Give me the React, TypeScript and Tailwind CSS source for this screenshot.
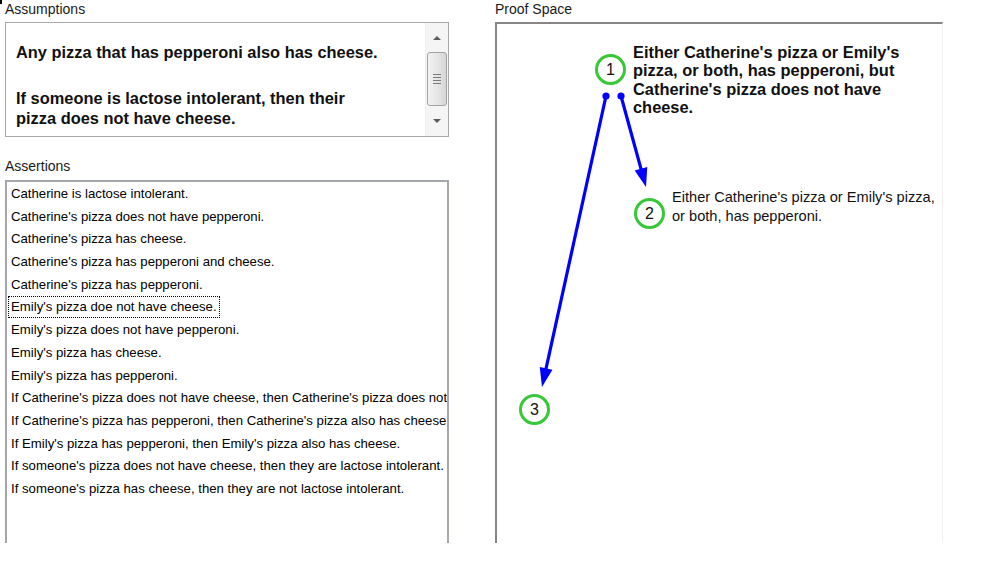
import React from "react";

const items = [
  "Catherine is lactose intolerant.",
  "Catherine's pizza does not have pepperoni.",
  "Catherine's pizza has cheese.",
  "Catherine's pizza has pepperoni and cheese.",
  "Catherine's pizza has pepperoni.",
  "Emily's pizza doe not have cheese.",
  "Emily's pizza does not have pepperoni.",
  "Emily's pizza has cheese.",
  "Emily's pizza has pepperoni.",
  "If Catherine's pizza does not have cheese, then Catherine's pizza does not have pepperoni.",
  "If Catherine's pizza has pepperoni, then Catherine's pizza also has cheese.",
  "If Emily's pizza has pepperoni, then Emily's pizza also has cheese.",
  "If someone's pizza does not have cheese, then they are lactose intolerant.",
  "If someone's pizza has cheese, then they are not lactose intolerant.",
];

function Arrow({ x1, y1, x2, y2 }: { x1: number; y1: number; x2: number; y2: number }) {
  const dx = x2 - x1;
  const dy = y2 - y1;
  const L = Math.hypot(dx, dy);
  const ux = dx / L;
  const uy = dy / L;
  const hl = 19;
  const hw = 6.5;
  const bx = x2 - ux * hl;
  const by = y2 - uy * hl;
  const lx = bx - uy * hw;
  const ly = by + ux * hw;
  const rx = bx + uy * hw;
  const ry = by - ux * hw;
  return (
    <g>
      <circle cx={x1} cy={y1} r={3.6} fill="#0000ff" />
      <line x1={x1} y1={y1} x2={bx + ux * 2} y2={by + uy * 2} stroke="#0000ff" strokeWidth={3.2} />
      <polygon points={`${x2},${y2} ${lx},${ly} ${rx},${ry}`} fill="#0000ff" />
    </g>
  );
}

function Node({ n, left, top }: { n: number; left: number; top: number }) {
  return (
    <div
      className="absolute w-[31px] h-[31px] rounded-full border-[3px] border-[#36c836] bg-white flex items-center justify-center text-[16px] text-[#111] leading-none"
      style={{ left, top, fontFamily: '"Liberation Sans", Arial, sans-serif' }}
    >
      {n}
    </div>
  );
}

export default function App() {
  return (
    <div
      className="relative w-[991px] h-[581px] bg-white overflow-hidden flex text-black"
      style={{ fontFamily: '"Liberation Sans", Arial, sans-serif' }}
    >
      <div className="absolute left-0 top-0 w-[2px] h-[4px] bg-black" />
      {/* Left column */}
      <div className="flex flex-col pl-[5px] w-[449px] h-[543px]">
        <div className="h-[22px] text-[14px] leading-[16px] pt-[1px] text-[#1a1a1a]">Assumptions</div>
        <div className="h-[115px] border border-[#a7a9ad] flex bg-white">
          <div className="flex-1 pl-[10px] pt-[19px] text-[16.4px] font-bold leading-[20px] text-[#111]">
            <div>Any pizza that has pepperoni also has cheese.</div>
            <div className="mt-[26px]">
              If someone is lactose intolerant, then their
              <br />
              pizza does not have cheese.
            </div>
          </div>
          <div className="w-[23px] bg-[#f5f5f5] flex flex-col border-l border-[#f0f0f0]">
            <div className="h-[29px] flex items-center justify-center">
              <div className="w-0 h-0 border-x-[4px] border-x-transparent border-b-[4px] border-b-[#5c5c5c]" />
            </div>
            <div className="h-[54px] mx-[1px] rounded-[3px] border border-[#a3a3a3] bg-gradient-to-r from-[#f2f2f2] via-[#e6e6e6] to-[#d6d6d6] flex flex-col items-center justify-center gap-[2px]">
              <div className="w-[8px] h-[1px] bg-[#7a7a7a]" />
              <div className="w-[8px] h-[1px] bg-[#7a7a7a]" />
              <div className="w-[8px] h-[1px] bg-[#7a7a7a]" />
              <div className="w-[8px] h-[1px] bg-[#7a7a7a]" />
            </div>
            <div className="flex-1 flex items-center justify-center">
              <div className="w-0 h-0 border-x-[4px] border-x-transparent border-t-[4px] border-t-[#5c5c5c]" />
            </div>
          </div>
        </div>
        <div className="mt-[21px] h-[22px] text-[14px] leading-[16px] text-[#1a1a1a]">Assertions</div>
        <div className="flex-1 border-x-2 border-t-2 border-[#a4a8ad] bg-white overflow-hidden">
          <div className="-mt-[1px]">
            {items.map((t, i) => (
              <div key={i} className="h-[22.7px] whitespace-nowrap pl-[1px]">
                <span
                  className={
                    "inline-block h-[22px] px-[3px] text-[13.2px] leading-[22px] " +
                    (i === 5 ? "outline-1 outline-dotted outline-offset-[-1px] outline-black" : "")
                  }
                >
                  {t}
                </span>
              </div>
            ))}
          </div>
        </div>
      </div>

      {/* Right column */}
      <div className="flex flex-col ml-[46px] w-[448px] h-[543px]">
        <div className="h-[22px] text-[14px] leading-[16px] pt-[1px] text-[#1a1a1a]">Proof Space</div>
        <div className="relative flex-1 border-l-2 border-t-2 border-[#868686] border-r border-r-[#f0f0f0] bg-white">
          <svg className="absolute inset-0" width="446" height="519">
            <Arrow x1={109} y1={72} x2={45} y2={363} />
            <Arrow x1={124} y1={72} x2={149} y2={163} />
          </svg>
          <Node n={1} left={98} top={30} />
          <div className="absolute left-[136px] top-[19px] text-[16.4px] font-bold leading-[18.4px] whitespace-nowrap text-[#111]">
            Either Catherine's pizza or Emily's
            <br />
            pizza, or both, has pepperoni, but
            <br />
            Catherine's pizza does not have
            <br />
            cheese.
          </div>
          <Node n={2} left={137} top={174} />
          <div className="absolute left-[175px] top-[164px] text-[14.6px] leading-[19px] whitespace-nowrap text-[#111]">
            Either Catherine's pizza or Emily's pizza,
            <br />
            or both, has pepperoni.
          </div>
          <Node n={3} left={22} top={370} />
        </div>
      </div>
    </div>
  );
}
